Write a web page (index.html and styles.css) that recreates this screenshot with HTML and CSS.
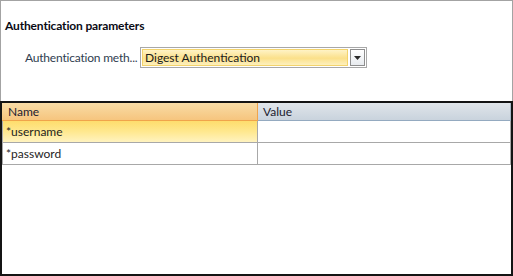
FILE: index.html
```html
<!DOCTYPE html>
<html>
<head>
<meta charset="utf-8">
<link rel="stylesheet" href="styles.css">
</head>
<body>
<div class="window">
  <div class="params">
    <div class="title">Authentication parameters</div>
    <div class="field-row">
      <div class="label">Authentication meth...</div>
      <div class="combo">
        <div class="combo-text">Digest Authentication</div>
        <div class="combo-btn">
          <svg width="7" height="4" viewBox="0 0 7 4"><path d="M0 0H7L3.5 4Z" fill="#2a2a2a"/></svg>
        </div>
      </div>
    </div>
  </div>
  <div class="grid">
    <div class="grid-row header">
      <div class="cell name-head">Name</div>
      <div class="cell value-head">Value</div>
    </div>
    <div class="grid-row">
      <div class="cell name selected">*username</div>
      <div class="cell value"></div>
    </div>
    <div class="grid-row">
      <div class="cell name">*password</div>
      <div class="cell value"></div>
    </div>
  </div>
</div>
</body>
</html>
```

FILE: styles.css
```css
html, body {
  margin: 0;
  padding: 0;
  background: #ffffff;
}
body {
  font-family: Lato, "Noto Sans", sans-serif;
  font-size: 12px;
  color: #1e1e1e;
}
.window {
  width: 513px;
  height: 276px;
  display: flex;
  flex-direction: column;
  box-sizing: border-box;
}
.params {
  height: 101px;
  box-sizing: border-box;
  border: 1px solid #a3a3a3;
  border-bottom: none;
  flex: none;
}
.title {
  font-weight: bold;
  color: #0a0a14;
  margin: 17px 0 0 4px;
  line-height: 16px;
  letter-spacing: -0.15px;
}
.field-row {
  display: flex;
  align-items: center;
  margin-top: 13px;
  padding-left: 24px;
}
.label {
  width: 115px;
  white-space: nowrap;
  color: #2f3d4f;
  letter-spacing: -0.2px;
}
.combo {
  width: 227px;
  height: 21px;
  box-sizing: border-box;
  border: 1px solid #a8a8a8;
  display: flex;
  align-items: center;
  padding: 1px;
  gap: 2px;
}
.combo-text {
  flex: 1;
  height: 17px;
  box-sizing: border-box;
  border: 1px solid #f3d36b;
  background: linear-gradient(#fff3c6, #fbe08a 55%, #fdf0bd);
  line-height: 15px;
  padding-left: 2px;
  color: #1a1a1a;
}
.combo-btn {
  width: 15px;
  height: 17px;
  box-sizing: border-box;
  border: 1px solid #8e8e8e;
  background: linear-gradient(#ffffff, #e8ebef);
  display: flex;
  align-items: center;
  justify-content: center;
}
.grid {
  flex: 1;
  border: 2px solid #141414;
  background: #ffffff;
}
.grid-row {
  display: flex;
  height: 22px;
  box-sizing: border-box;
}
.cell {
  box-sizing: border-box;
  line-height: 22px;
  border-bottom: 1px solid #a8a8a8;
}
.name {
  width: 256px;
  padding-left: 3px;
  border-right: 1px solid #a8a8a8;
  border-left: 1px solid #a8a8a8;
}
.value {
  flex: 1;
  border-right: 1px solid #a8a8a8;
}
.selected {
  background: linear-gradient(#fedd6d, #ffe88f 50%, #fff3c0);
}
.header {
  height: 18px;
}
.header .cell {
  line-height: 18px;
  color: #1c1c30;
}
.name-head {
  width: 256px;
  padding-left: 6px;
  background: linear-gradient(#f8dca6, #f6c57e);
  border-bottom: 1px solid #f0a44b;
  border-right: 1px solid #f0a44b;
}
.value-head {
  flex: 1;
  padding-left: 5px;
  background: linear-gradient(#e0e5ea, #c9d3dd);
  border-bottom: 1px solid #94aac0;
  border-right: 1px solid #a8b8c8;
}
```
